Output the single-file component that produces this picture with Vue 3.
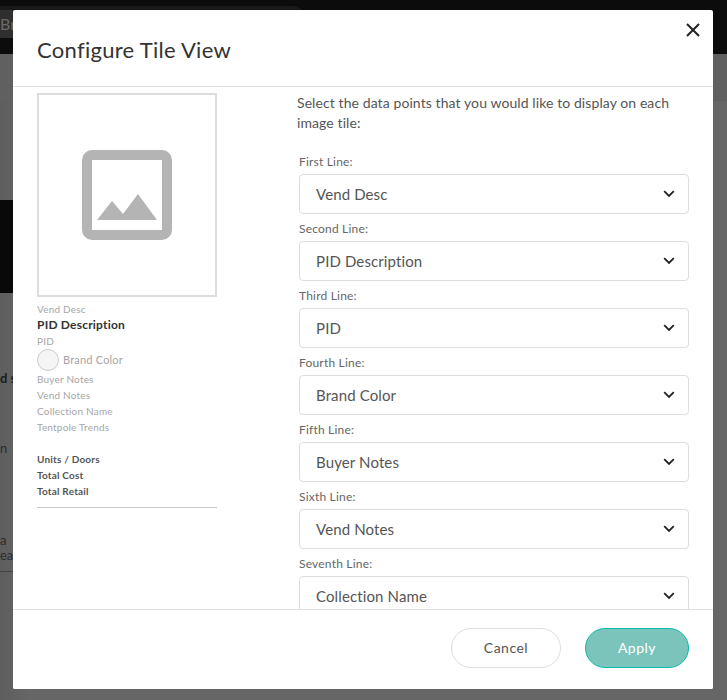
<script setup>
const rows = [
  ['First Line:', 'Vend Desc'],
  ['Second Line:', 'PID Description'],
  ['Third Line:', 'PID'],
  ['Fourth Line:', 'Brand Color'],
  ['Fifth Line:', 'Buyer Notes'],
  ['Sixth Line:', 'Vend Notes'],
  ['Seventh Line:', 'Collection Name'],
]
const notes = ['Buyer Notes', 'Vend Notes', 'Collection Name', 'Tentpole Trends']
const totals = ['Units / Doors', 'Total Cost', 'Total Retail']
</script>

<template>
  <div class="page">
    <div class="backdrop">
      <div class="bg-top"></div>
      <div class="bg-tab">Br</div>
      <div class="bg-band"></div>
      <div class="bg-dark"></div>
      <div class="bg-text t1">d st</div>
      <div class="bg-text t2">n</div>
      <div class="bg-text t3">a<br />ea</div>
      <div class="bg-line"></div>
    </div>
    <div class="modal">
      <header class="head">
        <h1>Configure Tile View</h1>
        <svg class="close" viewBox="0 0 14 14" width="14" height="14">
          <path d="M1 1 13 13M13 1 1 13" fill="none" stroke="#222" stroke-width="2" />
        </svg>
      </header>
      <main class="body">
        <section class="preview">
          <div class="tile">
            <svg viewBox="0 0 90 90" width="90" height="90">
              <path fill-rule="evenodd" fill="#b4b4b4" d="M10 0H80A10 10 0 0 1 90 10V80A10 10 0 0 1 80 90H10A10 10 0 0 1 0 80V10A10 10 0 0 1 10 0ZM10 10V80H80V10Z" />
              <path fill="#b4b4b4" d="M15 70 30 51 41 64 56 44 75 70Z" />
            </svg>
          </div>
          <p class="small first">Vend Desc</p>
          <p class="name">PID Description</p>
          <p class="small">PID</p>
          <div class="color"><span class="dot"></span><span class="color-name">Brand Color</span></div>
          <p v-for="n in notes" :key="n" class="small">{{ n }}</p>
          <div class="totals">
            <p v-for="t in totals" :key="t">{{ t }}</p>
          </div>
        </section>
        <section class="form">
          <p class="intro">Select the data points that you would like to display on each image tile:</p>
          <div v-for="r in rows" :key="r[0]" class="field">
            <label>{{ r[0] }}</label>
            <div class="select">
              <span>{{ r[1] }}</span>
              <svg viewBox="0 0 12 8" width="12" height="8">
                <path d="M1.2 1.2 6 6 10.8 1.2" fill="none" stroke="#222" stroke-width="1.8" />
              </svg>
            </div>
          </div>
        </section>
      </main>
      <footer class="foot">
        <button class="btn cancel">Cancel</button>
        <button class="btn apply">Apply</button>
      </footer>
    </div>
  </div>
</template>

<style>
html, body { margin: 0; background: #646464; }
</style>

<style scoped>
.page {
  position: relative;
  width: 727px;
  height: 700px;
  overflow: hidden;
  display: flex;
  align-items: flex-start;
  justify-content: flex-start;
  font-family: Lato, "Liberation Sans", sans-serif;
  background: linear-gradient(90deg, #5e5e5e 0, #666 30px, #666 100%);
}
.backdrop { position: absolute; inset: 0; }
.bg-top { position: absolute; left: 0; top: 0; width: 100%; height: 54px; background: #0c0c0c; }
.bg-tab {
  position: absolute; left: 0; top: 10px; width: 305px; height: 28px;
  background: #2f2f2f; color: #6a6a6a; font-size: 16px; font-weight: 400;
  line-height: 28px; border-radius: 0 12px 0 0;
  box-shadow: 0 -4px 0 #191919;
}
.bg-band { position: absolute; left: 0; top: 54px; width: 100%; height: 47px; background: #606060; }
.bg-dark { position: absolute; left: 0; top: 200px; width: 13px; height: 93px; background: #090909; }
.bg-text { position: absolute; color: #222; font-size: 13px; line-height: 15px; white-space: nowrap; }
.t1 { top: 371px; left: 0; font-weight: 700; color: #1c1c1c; }
.t2 { top: 441px; left: 0; color: #2c2c2c; }
.t3 { top: 533px; left: 0; color: #2c2c2c; }
.bg-line { position: absolute; left: 0; top: 571px; width: 13px; height: 1px; background: #444; }

.modal {
  position: relative;
  box-sizing: border-box;
  width: 700px;
  height: 679px;
  margin: 10px 0 0 13px;
  background: #fff;
  border-radius: 2px;
  display: flex;
  flex-direction: column;
  overflow: hidden;
}
.head {
  flex: none;
  box-sizing: border-box;
  height: 77px;
  padding: 27px 13px 0 24px;
  display: flex;
  justify-content: space-between;
  align-items: flex-start;
  border-bottom: 1px solid #e2e2e2;
}
h1 {
  margin: 0;
  font-size: 22px;
  font-weight: 400;
  line-height: 26px;
  letter-spacing: .28px;
  color: #333;
}
.close { margin-top: -14px; }
.body {
  flex: 1;
  min-height: 0;
  overflow: hidden;
  display: flex;
  padding: 6px 24px 0;
}
.preview { flex: none; width: 180px; margin-right: 80px; }
.tile {
  box-sizing: border-box;
  width: 180px;
  height: 204px;
  border: 2px solid #ddd;
  display: flex;
  align-items: center;
  justify-content: center;
}
p { margin: 0; }
.small { font-size: 10px; line-height: 16px; letter-spacing: .2px; color: #a6a6a6; }
.first { margin-top: 4px; }
.name { font-size: 12px; font-weight: 700; line-height: 15px; margin-bottom: 1px; letter-spacing: .2px; color: #333; }
.color {
  display: flex;
  align-items: center;
  gap: 4px;
  height: 22px;
  font-size: 11px;
  letter-spacing: .2px;
  color: #a6a6a6;
}
.color-name { margin-top: -2px; }
.dot {
  box-sizing: border-box;
  width: 22px;
  height: 22px;
  border: 1px solid #ccc;
  border-radius: 50%;
  background: #f5f5f5;
}
.totals {
  margin-top: 16px;
  padding-bottom: 8px;
  border-bottom: 1px solid #c8c8c8;
  font-size: 10px;
  font-weight: 700;
  line-height: 16px;
  letter-spacing: .2px;
  color: #555;
}
.form { flex: 1; min-width: 0; }
.intro { font-size: 14px; line-height: 20px; letter-spacing: .09px; color: #555; margin-bottom: 20px; }
.field { padding-left: 2px; margin-bottom: 6px; }
label { display: block; font-size: 12px; line-height: 14px; height: 21px; padding-top: 2px; box-sizing: border-box; letter-spacing: .2px; color: #666; }
.select {
  box-sizing: border-box;
  height: 40px;
  border: 1px solid #ddd;
  border-radius: 4px;
  display: flex;
  align-items: center;
  justify-content: space-between;
  padding: 0 13px 0 16px;
  font-size: 15px;
  letter-spacing: .12px;
  color: #555;
}
.foot {
  flex: none;
  box-sizing: border-box;
  height: 80px;
  border-top: 1px solid #e2e2e2;
  background: #fff;
  display: flex;
  justify-content: flex-end;
  gap: 24px;
  padding: 18px 24px 0;
}
.btn {
  box-sizing: border-box;
  height: 40px;
  padding: 0 0 2px;
  border-radius: 20px;
  font: 400 14px Lato, "Liberation Sans", sans-serif;
  letter-spacing: .5px;
}
.cancel { width: 110px; background: #fff; border: 1px solid #ddd; color: #555; }
.apply { width: 104px; background: #7bc4bc; border: 1px solid #12b8aa; color: #fff; }
</style>
